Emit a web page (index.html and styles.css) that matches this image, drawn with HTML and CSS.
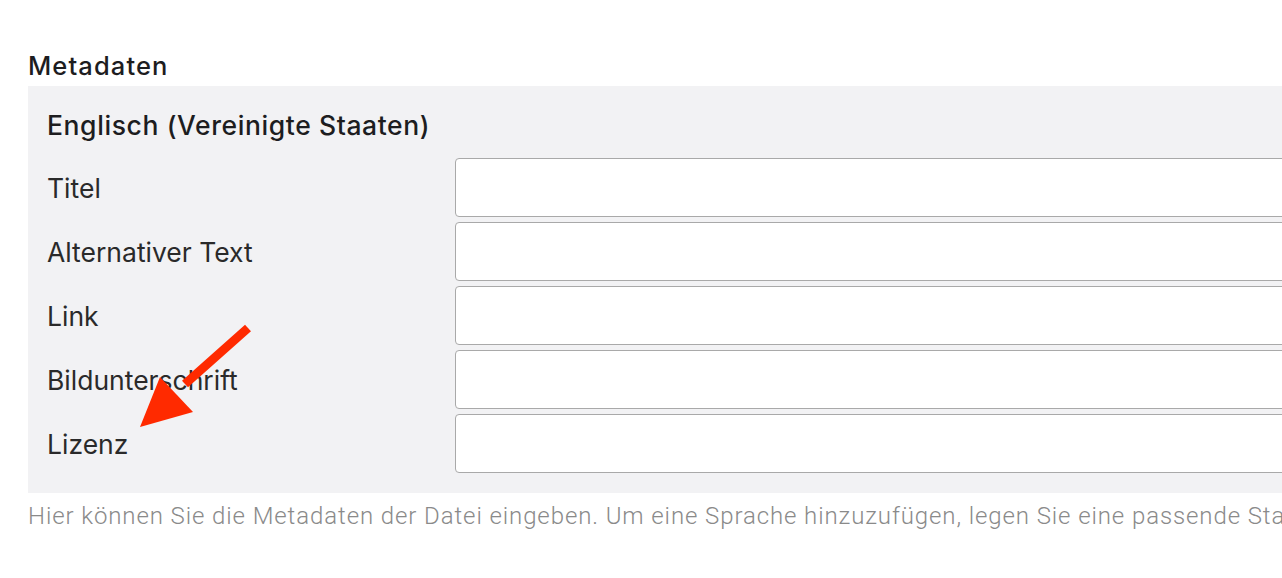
FILE: index.html
```html
<!DOCTYPE html>
<html lang="de">
<head>
<meta charset="utf-8">
<link rel="stylesheet" href="styles.css">
</head>
<body>
<div class="page">
  <h2 class="section-title">Metadaten</h2>
  <div class="panel">
    <h3 class="lang-title">Englisch (Vereinigte Staaten)</h3>
    <div class="fields">
      <label class="field-label">Titel</label><input class="field-input" type="text">
      <label class="field-label">Alternativer Text</label><input class="field-input" type="text">
      <label class="field-label">Link</label><input class="field-input" type="text">
      <label class="field-label">Bildunterschrift</label><input class="field-input" type="text">
      <label class="field-label">Lizenz</label><input class="field-input" type="text">
    </div>
  </div>
  <p class="help">Hier können Sie die Metadaten der Datei eingeben. Um eine Sprache hinzuzufügen, legen Sie eine passende Standardsprache an.</p>
  <svg class="arrow" width="140" height="120" viewBox="0 0 140 120">
    <line x1="108" y1="8" x2="45" y2="64" stroke="#ff2a00" stroke-width="9"/>
    <polygon points="0,107 20,57 53,92" fill="#ff2a00"/>
  </svg>
</div>
</body>
</html>
```
FILE: styles.css
```css
html, body {
  margin: 0;
  padding: 0;
  background: #ffffff;
  overflow: hidden;
}
.page {
  position: relative;
  width: 1282px;
  height: 578px;
  overflow: hidden;
  padding-left: 28px;
  box-sizing: border-box;
  font-family: Inter, "Noto Sans", sans-serif;
  color: #222222;
}
.section-title {
  margin: 0;
  padding-top: 51px;
  font-size: 25.5px;
  line-height: 30px;
  font-weight: 500;
  letter-spacing: 1.1px;
  height: 35px;
  color: #1d1d1f;
}
.panel {
  width: 1400px;
  background: #f2f2f4;
  padding: 0 19px 20px 19px;
  box-sizing: border-box;
}
.lang-title {
  margin: 0;
  padding-top: 24px;
  margin-bottom: 18px;
  font-size: 26.5px;
  line-height: 30px;
  font-weight: 500;
  letter-spacing: 0.6px;
  color: #1d1d1f;
}
.fields {
  display: grid;
  grid-template-columns: 408px 1fr;
  row-gap: 5px;
  align-items: center;
}
.field-label {
  font-size: 26.5px;
  line-height: 30px;
  color: #2a2a2a;
}
.field-input {
  height: 59px;
  box-sizing: border-box;
  border: 1.5px solid #a9a9a9;
  border-radius: 4px;
  background: #ffffff;
  margin: 0;
}
.help {
  margin: 0;
  padding-top: 9px;
  white-space: nowrap;
  font-family: Roboto, "Noto Sans", sans-serif;
  font-weight: 300;
  font-size: 24px;
  line-height: 28px;
  letter-spacing: 0.9px;
  color: #8a8a8a;
}
.arrow {
  position: absolute;
  left: 140px;
  top: 320px;
}
```
